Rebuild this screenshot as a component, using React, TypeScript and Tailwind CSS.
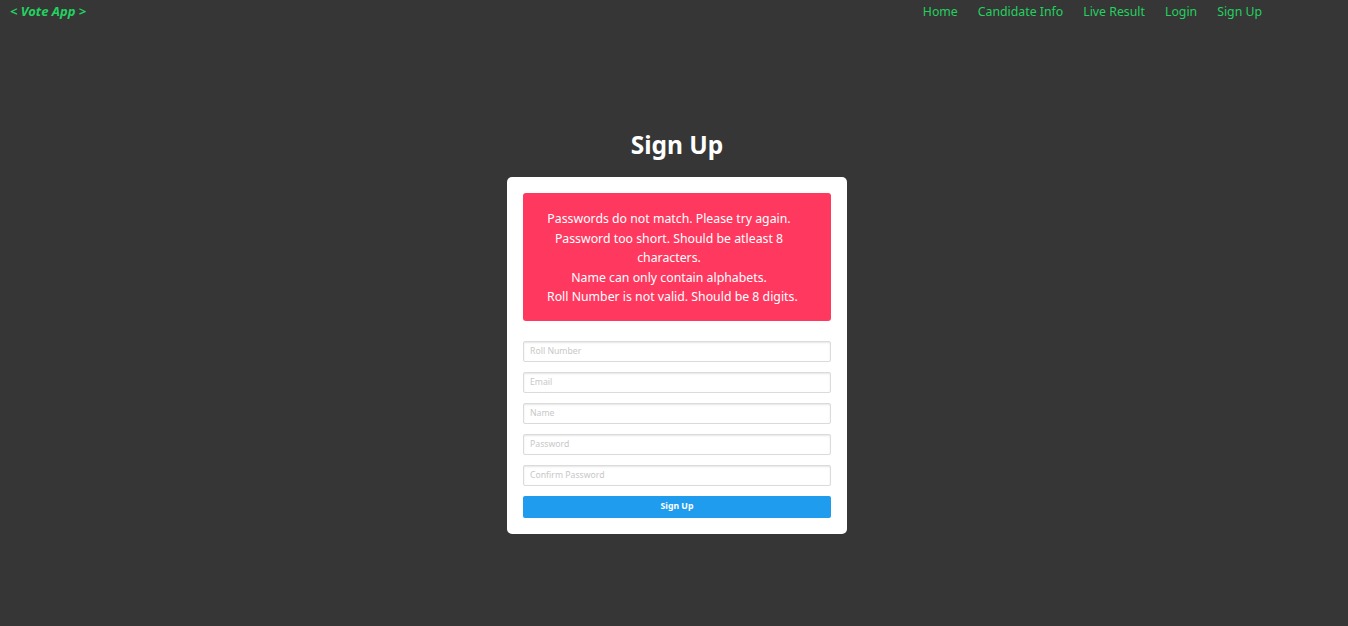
import { useState } from "react";

const navLinks = ["Home", "Candidate Info", "Live Result", "Login", "Sign Up"];

const errors = [
  "Passwords do not match. Please try again.",
  "Password too short. Should be atleast 8",
  "characters.",
  "Name can only contain alphabets.",
  "Roll Number is not valid. Should be 8 digits.",
];

const fields = [
  { name: "roll", placeholder: "Roll Number", type: "text" },
  { name: "email", placeholder: "Email", type: "email" },
  { name: "name", placeholder: "Name", type: "text" },
  { name: "password", placeholder: "Password", type: "password" },
  { name: "confirm", placeholder: "Confirm Password", type: "password" },
];

const App = () => {
  const [values, setValues] = useState<Record<string, string>>({});

  return (
    <div className="min-h-screen bg-[#363636] font-['Noto_Sans',sans-serif]">
      <nav className="flex items-center justify-between h-[24px] pl-[10px] pr-[86px]">
        <a className="text-[13px] font-bold italic text-[#23d160]">&lt; Vote App &gt;</a>
        <div className="flex gap-[20px] text-[12.3px] text-[#23d160]">
          {navLinks.map((l) => (
            <a key={l}>{l}</a>
          ))}
        </div>
      </nav>

      <div className="flex flex-col items-center pt-[103px] pl-[6px]">
        <h1 className="text-[24.5px] font-bold text-white leading-[36px]">Sign Up</h1>
        <div className="mt-[14px] w-[340px] bg-white rounded-[5px] p-4">
          <div className="bg-[#ff3860] rounded-[3px] pt-4 pb-[14px] pl-6 pr-10 text-white text-[12.3px] leading-[19.5px] text-center">
            {errors.map((e, i) => (
              <div key={i} className="whitespace-nowrap">{e}</div>
            ))}
          </div>
          <form className="mt-5 flex flex-col gap-[10px]" onSubmit={(e) => e.preventDefault()}>
            {fields.map((f) => (
              <input
                key={f.name}
                type={f.type}
                placeholder={f.placeholder}
                value={values[f.name] || ""}
                onChange={(e) => setValues({ ...values, [f.name]: e.target.value })}
                className="h-[21px] w-full border border-[#dbdbdb] rounded-[2px] shadow-[inset_0_1px_2px_rgba(10,10,10,0.1)] px-[6px] text-[8.7px] text-[#363636] placeholder:text-[#c8c8c8] outline-none"
              />
            ))}
            <button type="submit" className="h-[22px] w-full bg-[#209cee] rounded-[2px] text-white text-[8.7px] font-bold">
              Sign Up
            </button>
          </form>
        </div>
      </div>
    </div>
  );
};

export default App;
